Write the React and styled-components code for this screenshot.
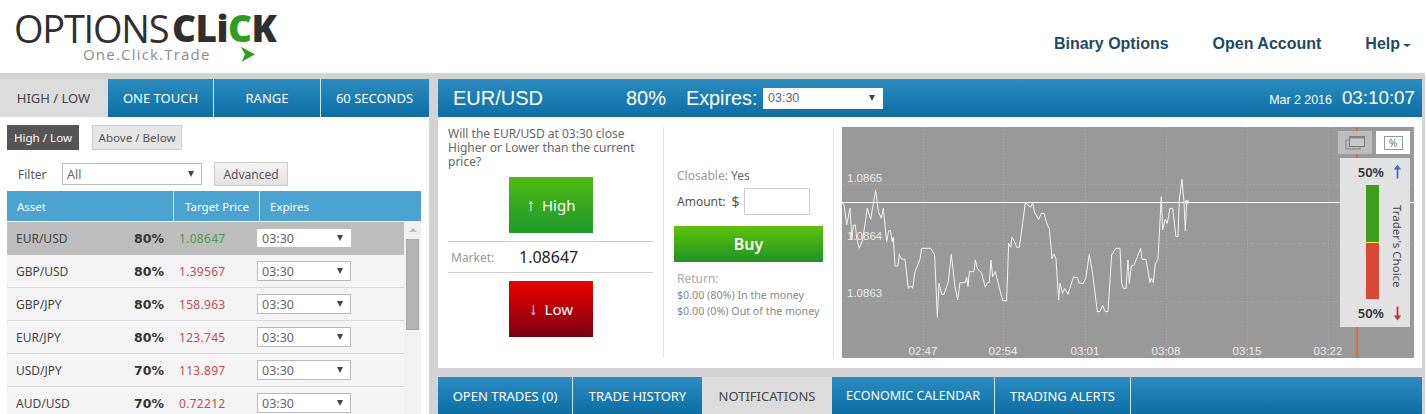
import React from 'react';
import styled, { createGlobalStyle } from 'styled-components';

const GlobalStyle = createGlobalStyle`
  html, body {
    margin: 0;
    padding: 0;
    background: #fff;
  }
  * {
    box-sizing: border-box;
  }
`;

const uiFont = `"Noto Sans", "Open Sans", Arial, sans-serif`;
const headFont = `"Liberation Sans", Arial, sans-serif`;
const blueBar = 'linear-gradient(to bottom, #2a8cc1, #0c6ea4)';

const Page = styled.div`
  width: 1426px;
  height: 414px;
  overflow: hidden;
  background: #fff;
  font-family: ${uiFont};
  color: #444;
`;

const TopBar = styled.div`
  height: 73px;
  display: flex;
  justify-content: space-between;
  padding: 0 12px 0 14px;
  margin-right: 3px;
`;

const Logo = styled.div`
  position: relative;
  width: 272px;
  padding-top: 9px;
`;

const LogoName = styled.div`
  display: flex;
  font-family: "Open Sans", sans-serif;
  font-size: 38px;
  line-height: 38px;
  color: #2f2f2f;
  white-space: nowrap;
`;

const LogoThin = styled.span`
  font-weight: 400;
  letter-spacing: -1.25px;
  width: 158px;
`;

const LogoBold = styled.span`
  font-weight: 800;
  font-size: 37px;
  letter-spacing: -0.5px;
`;

const LogoGreen = styled.span`
  color: #2f9e1f;
`;

const Tagline = styled.div`
  margin-left: 69px;
  font-family: "Open Sans", sans-serif;
  font-size: 15px;
  line-height: 14px;
  letter-spacing: 1.2px;
  color: #8c8c8c;
`;

const LogoArrow = styled.svg`
  position: absolute;
  left: 226px;
  top: 46px;
`;

const Nav = styled.nav`
  display: flex;
  align-items: center;
  gap: 44px;
  padding-top: 15px;
`;

const NavLink = styled.a`
  font-family: ${headFont};
  font-weight: 700;
  font-size: 16px;
  color: #1f4a66;
  white-space: nowrap;
`;

const NavCaret = styled.span`
  display: inline-block;
  margin-left: 3px;
  vertical-align: 2px;
  border-left: 4px solid transparent;
  border-right: 4px solid transparent;
  border-top: 3px solid #1f4a66;
`;

const Main = styled.div`
  display: flex;
  height: 341px;
  margin-right: 1px;
  padding: 6px 3px 0 0;
  background: #d3d3d3;
`;

const LeftPanel = styled.div`
  width: 429px;
  height: 335px;
  flex: none;
  background: #fff;
`;

const TabBar = styled.div`
  display: flex;
  height: 38px;
  background: ${blueBar};
`;

const Tab = styled.div`
  width: ${(p) => p.$w}px;
  flex: none;
  display: flex;
  align-items: center;
  justify-content: center;
  font-size: ${(p) => p.$size || 13}px;
  white-space: nowrap;
  color: ${(p) => (p.$active ? '#444' : '#fff')};
  background: ${(p) => (p.$active ? '#dcdcdc' : 'transparent')};
  border-right: 1px solid ${(p) => (p.$active || p.$last ? 'transparent' : '#cfe4f0')};
`;

const ModeRow = styled.div`
  display: flex;
  gap: 13px;
  padding: 8px 0 0 7px;
`;

const ModeButton = styled.div`
  width: ${(p) => p.$w}px;
  height: 25px;
  display: flex;
  align-items: center;
  justify-content: center;
  font-size: 11.6px;
  color: ${(p) => (p.$active ? '#fff' : '#555')};
  background: ${(p) => (p.$active ? '#555' : '#e6e6e6')};
  border: 1px solid ${(p) => (p.$active ? '#555' : '#ccc')};
`;

const FilterRow = styled.div`
  display: flex;
  align-items: center;
  height: 24px;
  margin-top: 12px;
  padding-left: 18px;
  font-size: 12px;
  color: #555;
`;

const FilterLabel = styled.span`
  width: 44px;
`;

const SelectBox = styled.div`
  width: ${(p) => p.$w}px;
  height: ${(p) => p.$h}px;
  flex: none;
  display: flex;
  align-items: center;
  justify-content: space-between;
  padding: 0 7px 0 4px;
  background: #fff;
  border: 1px solid ${(p) => (p.$plain ? '#fff' : '#bbb')};
  font-size: 12.5px;
  color: #666;
`;

const Caret = styled.span`
  border-left: 3px solid transparent;
  border-right: 3px solid transparent;
  border-top: 6px solid #444;
`;

const AdvancedButton = styled.div`
  width: 74px;
  height: 24px;
  margin-left: 12px;
  display: flex;
  align-items: center;
  justify-content: center;
  background: linear-gradient(to bottom, #f4f4f4, #e2e2e2);
  border: 1px solid #ccc;
  font-size: 12px;
  color: #555;
`;

const AssetTable = styled.div`
  width: 414px;
  margin: 5px 0 0 7px;
`;

const TableHead = styled.div`
  display: grid;
  grid-template-columns: 167px 86px 161px;
  height: 30px;
  background: #4ba3d1;
  font-size: 11.5px;
  color: #fff;
`;

const HeadCell = styled.div`
  display: flex;
  align-items: center;
  padding-left: ${(p) => p.$pad}px;
  border-right: 1px solid ${(p) => (p.$last ? 'transparent' : '#d7ebf5')};
`;

const TableBody = styled.div`
  display: flex;
  height: 193px;
  margin-top: 1px;
  overflow: hidden;
`;

const Rows = styled.div`
  width: 397px;
  flex: none;
`;

const Row = styled.div`
  display: grid;
  grid-template-columns: 100px 48px 93px 1fr;
  align-items: center;
  height: 33px;
  padding-left: 9px;
  font-size: 12px;
  background: ${(p) => (p.$active ? '#bdbdbd' : '#f4f4f4')};
  border-bottom: 1px solid ${(p) => (p.$active ? '#bdbdbd' : '#d8d8d8')};
`;

const AssetName = styled.span`
  color: #444;
`;

const Payout = styled.span`
  font-family: "DejaVu Sans", sans-serif;
  font-weight: 700;
  font-size: 12.5px;
  text-align: right;
  color: #333;
`;

const Price = styled.span`
  padding-left: 15px;
  letter-spacing: 0.3px;
  color: ${(p) => (p.$up ? '#4f9a4f' : '#c8485a')};
`;

const ScrollTrack = styled.div`
  width: 17px;
  flex: none;
  padding: 6px 2px 0;
  background: #f1f1f1;
`;

const ScrollUp = styled.div`
  width: 0;
  height: 0;
  margin: 0 auto 7px;
  border-left: 4px solid transparent;
  border-right: 4px solid transparent;
  border-bottom: 4px solid #bbb;
`;

const ScrollThumb = styled.div`
  height: 91px;
  background: #b4b4b4;
  border: 1px solid #a8a8a8;
`;

const RightColumn = styled.div`
  width: 984px;
  margin-left: 9px;
  flex: none;
`;

const TitleBar = styled.div`
  display: flex;
  align-items: center;
  height: 38px;
  padding: 0 7px 0 15px;
  background: ${blueBar};
  color: #fff;
  font-family: ${headFont};
`;

const TitlePair = styled.span`
  width: 173px;
  font-size: 20px;
`;

const TitlePct = styled.span`
  width: 60px;
  font-size: 20px;
`;

const TitleExpires = styled.span`
  width: 77px;
  font-size: 19.8px;
`;

const TitleDate = styled.span`
  margin-left: auto;
  font-size: 12.4px;
  padding-top: 3px;
`;

const TitleTime = styled.span`
  margin-left: 10px;
  font-size: 18.8px;
`;

const TradeBody = styled.div`
  display: flex;
  height: 251px;
  padding: 10px 8px 10px 0;
  background: #fff;
`;

const AskColumn = styled.div`
  width: 226px;
  flex: none;
  padding: 0 10px;
  border-right: 1px solid #e4e4e4;
`;

const Question = styled.p`
  margin: 0;
  font-size: 12px;
  line-height: 14px;
  color: #666;
`;

const TradeButton = styled.div`
  width: 84px;
  height: 56px;
  margin: ${(p) => p.$top}px auto 0 61px;
  padding-bottom: 1px;
  display: flex;
  align-items: center;
  justify-content: center;
  gap: 7px;
  font-size: 15px;
  color: #fff;
  background: ${(p) =>
    p.$kind === 'high'
      ? 'linear-gradient(to bottom, #52b812, #1c9a2b)'
      : 'linear-gradient(to bottom, #ec0000, #7a0012)'};
`;

const ButtonArrow = styled.span`
  font-size: 17px;
  font-weight: 700;
  line-height: 20px;
`;

const MarketRow = styled.div`
  display: flex;
  align-items: center;
  height: 32px;
  margin-top: 8px;
  padding-left: 3px;
  border-top: 1px solid #d0d0d0;
  border-bottom: 1px solid #d0d0d0;
`;

const MarketLabel = styled.span`
  width: 68px;
  font-size: 12px;
  color: #999;
`;

const MarketValue = styled.span`
  font-size: 16px;
  color: #222;
`;

const OrderColumn = styled.div`
  width: 170px;
  flex: none;
  padding: 41px 0 0 10px;
  border-right: 1px solid #e4e4e4;
`;

const Closable = styled.div`
  padding-left: 3px;
  font-size: 12px;
  line-height: 16px;
  color: #999;
`;

const ClosableValue = styled.span`
  color: #666;
`;

const AmountRow = styled.div`
  display: flex;
  align-items: center;
  height: 27px;
  margin-top: 4px;
  padding-left: 3px;
  font-size: 12px;
  color: #555;
`;

const Dollar = styled.span`
  margin-left: 6px;
  font-size: 14px;
`;

const AmountInput = styled.div`
  width: 66px;
  height: 27px;
  margin-left: 4px;
  border: 1px solid #ccc;
  background: #fff;
`;

const BuyButton = styled.div`
  width: 149px;
  height: 36px;
  margin-top: 11px;
  display: flex;
  align-items: center;
  justify-content: center;
  font-size: 16px;
  font-weight: 600;
  color: #fff;
  background: linear-gradient(to bottom, #60c208, #1d9426);
`;

const ReturnBlock = styled.div`
  margin-top: 8px;
  padding-left: 3px;
  font-size: 10.7px;
  line-height: 16px;
  color: #888;
  white-space: nowrap;
`;

const ReturnTitle = styled.div`
  font-size: 12px;
  line-height: 17px;
  color: #aaa;
`;

const Chart = styled.div`
  position: relative;
  width: 572px;
  height: 231px;
  margin-left: 8px;
  flex: none;
  background: #999;
`;

const ChartSvg = styled.svg`
  display: block;
`;

const ChartLabel = styled.text`
  font-family: ${headFont};
  font-size: 11.5px;
  fill: #ececec;
`;

const ChartTools = styled.div`
  position: absolute;
  top: 4px;
  left: 496px;
  display: flex;
  gap: 4px;
`;

const ToolButton = styled.div`
  width: 34px;
  height: 23px;
  display: flex;
  align-items: center;
  justify-content: center;
  background: ${(p) => (p.$active ? '#bcbcbc' : '#fff')};
`;

const PctBox = styled.span`
  width: 19px;
  height: 14px;
  display: flex;
  align-items: center;
  justify-content: center;
  border: 1px solid #999;
  font-size: 10.5px;
  color: #777;
`;

const TraderBox = styled.div`
  position: absolute;
  top: 31px;
  left: 498px;
  width: 70px;
  height: 169px;
  display: grid;
  grid-template-columns: 44px 26px;
  grid-template-rows: 27px 114px 28px;
  background: #e2e2e2;
`;

const TraderPct = styled.div`
  display: flex;
  align-items: center;
  justify-content: flex-end;
  font-size: 13px;
  font-weight: 600;
  color: #333;
`;

const TraderArrow = styled.div`
  display: flex;
  align-items: center;
  justify-content: center;
  padding-left: 1px;
`;

const TraderBar = styled.div`
  width: 13px;
  height: 114px;
  margin-left: 26px;
  display: flex;
  flex-direction: column;
`;

const TraderPart = styled.div`
  flex: 1;
  background: ${(p) => p.$color};
  border-bottom: ${(p) => (p.$mark ? '1px solid #f2e36a' : '0')};
`;

const TraderLabel = styled.div`
  display: flex;
  align-items: center;
  justify-content: center;
  padding-top: 8px;
  writing-mode: vertical-rl;
  font-size: 11.5px;
  color: #444;
  white-space: nowrap;
`;

const BottomGap = styled.div`
  height: 9px;
`;

const BottomTabs = styled.div`
  display: flex;
  height: 37px;
  background: ${blueBar};
`;

const rows = [
  { pair: 'EUR/USD', pct: '80%', price: '1.08647', up: true },
  { pair: 'GBP/USD', pct: '80%', price: '1.39567' },
  { pair: 'GBP/JPY', pct: '80%', price: '158.963' },
  { pair: 'EUR/JPY', pct: '80%', price: '123.745' },
  { pair: 'USD/JPY', pct: '70%', price: '113.897' },
  { pair: 'AUD/USD', pct: '70%', price: '0.72212' },
];

const topTabs = [
  { label: 'HIGH / LOW', w: 108, active: true },
  { label: 'ONE TOUCH', w: 106 },
  { label: 'RANGE', w: 107 },
  { label: '60 SECONDS', w: 108, last: true },
];

const lowerTabs = [
  { label: 'OPEN TRADES (0)', w: 135 },
  { label: 'TRADE HISTORY', w: 130 },
  { label: 'NOTIFICATIONS', w: 129, active: true },
  { label: 'ECONOMIC CALENDAR', w: 163, size: 12.5 },
  { label: 'TRADING ALERTS', w: 136 },
];

// traced off the reference, in 3x crop coordinates
const tick = `5,127 12,135 20,195 30,145 36,240 40,195 46,195 50,235 58,265 68,240 82,145 92,178 107,90 115,155 124,175 130,145 140,245 146,212 152,212 156,245 160,232 165,318 174,318 178,282 184,297 195,298 205,385 212,378 218,385 225,335 240,298 245,265 272,265 284,285 292,472 297,370 305,403 312,403 325,365 334,283 345,380 353,420 360,368 375,368 380,352 384,380 388,335 402,335 406,300 412,325 425,340 436,382 442,368 448,368 453,300 458,350 466,335 476,375 488,422 500,422 506,250 512,262 516,232 524,245 530,262 538,262 548,190 556,128 572,142 578,128 584,158 596,178 604,160 612,160 622,195 628,205 636,296 642,282 648,296 656,420 660,370 668,400 674,385 684,403 700,352 712,352 718,370 730,370 738,352 748,283 758,340 772,455 780,455 788,437 796,455 804,455 815,285 828,265 840,265 845,370 850,385 858,385 864,300 868,370 874,318 882,316 902,265 906,298 918,298 930,368 934,355 940,368 946,312 954,298 964,110 968,210 976,178 982,190 990,145 998,145 1008,230 1014,230 1018,120 1026,58 1032,125 1036,212 1040,125`;

const gridY = [57, 116, 174];
const timeTicks = [
  { x: 81, label: '02:47' },
  { x: 161, label: '02:54' },
  { x: 243, label: '03:01' },
  { x: 324, label: '03:08' },
  { x: 405, label: '03:15' },
  { x: 486, label: '03:22' },
];
const priceTicks = [
  { y: 55, label: '1.0865' },
  { y: 113, label: '1.0864' },
  { y: 170, label: '1.0863' },
];

const PriceChart = () => (
  <ChartSvg width="572" height="231" viewBox="0 0 572 231">
    {gridY.map((y) => (
      <line key={y} x1="0" x2="572" y1={y + 0.5} y2={y + 0.5} stroke="#adadad" strokeDasharray="1 2" />
    ))}
    {timeTicks.map((t) => (
      <line key={t.x} x1={t.x + 0.5} x2={t.x + 0.5} y1="0" y2="231" stroke="#adadad" strokeDasharray="1 2" />
    ))}
    <line x1="515" x2="515" y1="0" y2="231" stroke="#d0703a" strokeWidth="2" />
    {priceTicks.map((t) => (
      <ChartLabel key={t.label} x="5" y={t.y}>{t.label}</ChartLabel>
    ))}
    {timeTicks.map((t) => (
      <ChartLabel key={t.label} x={t.x} y="228" textAnchor="middle">{t.label}</ChartLabel>
    ))}
    <line x1="0" x2="572" y1="75.5" y2="75.5" stroke="#fff" />
    <g transform="translate(-2 33) scale(0.3333)">
      <polyline points={tick} fill="none" stroke="#f4f4f4" strokeWidth="3" strokeLinejoin="round" />
    </g>
    <circle cx="345" cy="75" r="2" fill="#f4f4f4" />
  </ChartSvg>
);

const WindowsIcon = () => (
  <svg width="20" height="16" viewBox="0 0 20 16">
    <rect x="1" y="5" width="14" height="9" fill="none" stroke="#888" />
    <rect x="4.5" y="1.5" width="15" height="10" fill="#c8c8c8" stroke="#777" />
    <rect x="4.5" y="1.5" width="15" height="2" fill="#888" />
  </svg>
);

const TraderUpArrow = ({ color }) => (
  <svg width="9" height="15" viewBox="0 0 9 15">
    <path d="M4.5 0.5 L8.2 5.5 H5.4 V14.5 H3.6 V5.5 H0.8 Z" fill={color} />
  </svg>
);

const TraderDownArrow = ({ color }) => (
  <svg width="9" height="15" viewBox="0 0 9 15">
    <path d="M4.5 14.5 L8.2 9.5 H5.4 V0.5 H3.6 V9.5 H0.8 Z" fill={color} />
  </svg>
);

export default function App() {
  return (
    <Page>
      <GlobalStyle />
      <TopBar>
        <Logo>
          <LogoName>
            <LogoThin>OPTIONS</LogoThin>
            <LogoBold>
              CLi<LogoGreen>C</LogoGreen>K
            </LogoBold>
          </LogoName>
          <Tagline>One.Click.Trade</Tagline>
          <LogoArrow width="16" height="17" viewBox="0 0 16 17">
            <polygon points="0.7,0.7 15,8.3 1.7,15.7 5,8.3" fill="#2f9e1f" />
          </LogoArrow>
        </Logo>
        <Nav>
          <NavLink>Binary Options</NavLink>
          <NavLink>Open Account</NavLink>
          <NavLink>
            Help<NavCaret />
          </NavLink>
        </Nav>
      </TopBar>

      <Main>
        <LeftPanel>
          <TabBar>
            {topTabs.map((t) => (
              <Tab key={t.label} $w={t.w} $active={t.active} $last={t.last}>{t.label}</Tab>
            ))}
          </TabBar>
          <ModeRow>
            <ModeButton $active $w={72}>High / Low</ModeButton>
            <ModeButton $w={90}>Above / Below</ModeButton>
          </ModeRow>
          <FilterRow>
            <FilterLabel>Filter</FilterLabel>
            <SelectBox $w={140} $h={22}>
              All
              <Caret />
            </SelectBox>
            <AdvancedButton>Advanced</AdvancedButton>
          </FilterRow>
          <AssetTable>
            <TableHead>
              <HeadCell $pad={10}>Asset</HeadCell>
              <HeadCell $pad={11}>Target Price</HeadCell>
              <HeadCell $pad={10} $last>Expires</HeadCell>
            </TableHead>
            <TableBody>
              <Rows>
                {rows.map((r, i) => (
                  <Row key={r.pair} $active={i === 0}>
                    <AssetName>{r.pair}</AssetName>
                    <Payout>{r.pct}</Payout>
                    <Price $up={r.up}>{r.price}</Price>
                    <SelectBox $w={94} $h={i === 0 ? 18 : 20} $plain={i === 0}>
                      03:30
                      <Caret />
                    </SelectBox>
                  </Row>
                ))}
              </Rows>
              <ScrollTrack>
                <ScrollUp />
                <ScrollThumb />
              </ScrollTrack>
            </TableBody>
          </AssetTable>
        </LeftPanel>

        <RightColumn>
          <TitleBar>
            <TitlePair>EUR/USD</TitlePair>
            <TitlePct>80%</TitlePct>
            <TitleExpires>Expires:</TitleExpires>
            <SelectBox $w={120} $h={21} $plain>
              03:30
              <Caret />
            </SelectBox>
            <TitleDate>Mar 2 2016</TitleDate>
            <TitleTime>03:10:07</TitleTime>
          </TitleBar>

          <TradeBody>
            <AskColumn>
              <Question>Will the EUR/USD at 03:30 close Higher or Lower than the current price?</Question>
              <TradeButton $kind="high" $top={8}>
                <ButtonArrow>↑</ButtonArrow> High
              </TradeButton>
              <MarketRow>
                <MarketLabel>Market:</MarketLabel>
                <MarketValue>1.08647</MarketValue>
              </MarketRow>
              <TradeButton $kind="low" $top={8}>
                <ButtonArrow>↓</ButtonArrow> Low
              </TradeButton>
            </AskColumn>

            <OrderColumn>
              <Closable>
                Closable: <ClosableValue>Yes</ClosableValue>
              </Closable>
              <AmountRow>
                Amount:
                <Dollar>$</Dollar>
                <AmountInput />
              </AmountRow>
              <BuyButton>Buy</BuyButton>
              <ReturnBlock>
                <ReturnTitle>Return:</ReturnTitle>
                <div>$0.00 (80%) In the money</div>
                <div>$0.00 (0%) Out of the money</div>
              </ReturnBlock>
            </OrderColumn>

            <Chart>
              <PriceChart />
              <ChartTools>
                <ToolButton $active>
                  <WindowsIcon />
                </ToolButton>
                <ToolButton>
                  <PctBox>%</PctBox>
                </ToolButton>
              </ChartTools>
              <TraderBox>
                <TraderPct>50%</TraderPct>
                <TraderArrow>
                  <TraderUpArrow color="#4a6fb5" />
                </TraderArrow>
                <TraderBar>
                  <TraderPart $color="#3f9e1c" $mark />
                  <TraderPart $color="#d94a36" />
                </TraderBar>
                <TraderLabel>Trader's Choice</TraderLabel>
                <TraderPct>50%</TraderPct>
                <TraderArrow>
                  <TraderDownArrow color="#c8323c" />
                </TraderArrow>
              </TraderBox>
            </Chart>
          </TradeBody>

          <BottomGap />
          <BottomTabs>
            {lowerTabs.map((t) => (
              <Tab key={t.label} $w={t.w} $active={t.active} $size={t.size}>{t.label}</Tab>
            ))}
          </BottomTabs>
        </RightColumn>
      </Main>
    </Page>
  );
}
